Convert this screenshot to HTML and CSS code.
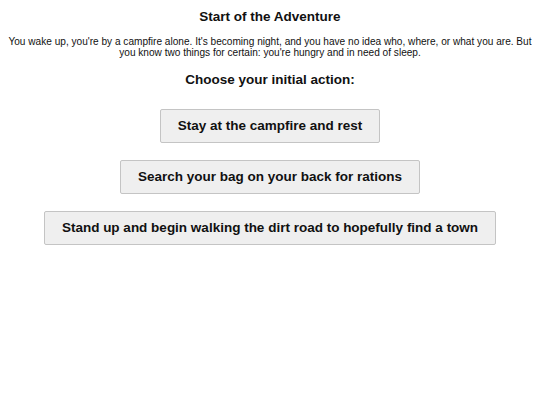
FILE: index.html
```html
<!DOCTYPE html>
<html lang="en">
<head>
  <meta charset="UTF-8" />
  <meta name="viewport" content="width=device-width, initial-scale=1.0"/>
  <title>Start of the Adventure</title>
  <link rel="stylesheet" href="styles.css">
</head>
<body>
  <main class="story">
    <h1>Start of the Adventure</h1>
    <p class="intro">You wake up, you're by a campfire alone. It's becoming night, and you have no idea who, where, or what you are. But you know two things for certain: you're hungry and in need of sleep.</p>
    <h2>Choose your initial action:</h2>

    <!-- Choices -->
    <div class="choices">
      <button class="choice">Stay at the campfire and rest</button>
      <button class="choice">Search your bag on your back for rations</button>
      <button class="choice">Stand up and begin walking the dirt road to hopefully find a town</button>
    </div>
  </main>
</body>
</html>
```

FILE: styles.css
```css
body {
  font-family: 'Liberation Sans', Arial, sans-serif;
  margin: 8px;
  background-color: white;
  color: #111;
  text-align: center;
}

h1 {
  font-size: 13.5px;
  line-height: 16px;
  margin: 1px 0 11px;
}

.intro {
  font-size: 10.1px;
  line-height: 11px;
  margin: 0 0 14px;
}

h2 {
  font-size: 13.5px;
  line-height: 16px;
  margin: 0 0 21px;
}

.choices {
  display: flex;
  flex-direction: column;
  align-items: center;
  gap: 17px;
}

.choice {
  font-family: inherit;
  font-size: 13.5px;
  line-height: 16px;
  font-weight: bold;
  color: #111;
  background-color: #efefef;
  border: 1px solid #c4c4c4;
  border-radius: 2px;
  padding: 8px 17px;
}
```
